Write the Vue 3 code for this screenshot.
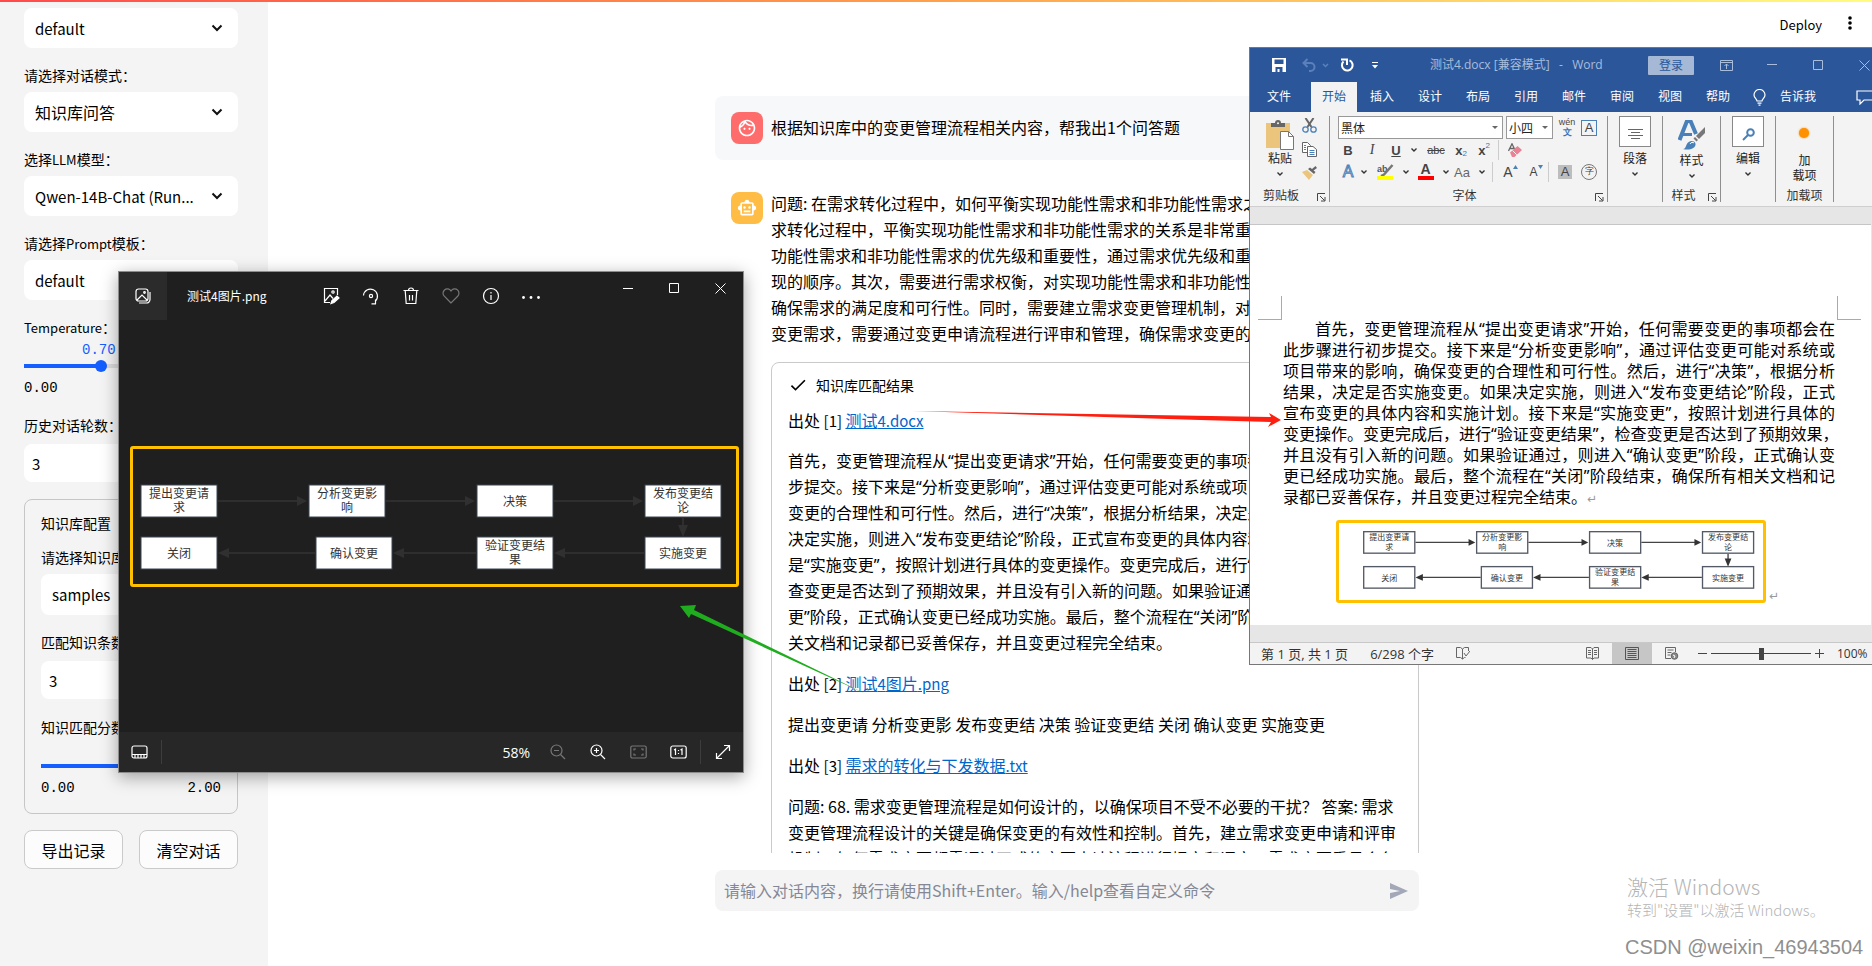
<script setup>
import { ref, h } from 'vue'

const temperature = ref(0.7)
const threshold = ref(1.2)
const rounds = ref(3)
const topK = ref(3)
const draft = ref('')
const fontSize = ref('小四')
const fontName = ref('黑体')

const fill = (value) => ({ '--fill': `${(value / 2) * 100}%` })

const answerLines = [
  '问题: 在需求转化过程中，如何平衡实现功能性需求和非功能性需求之间的关系？',
  '求转化过程中，平衡实现功能性需求和非功能性需求的关系是非常重要的。首先，',
  '功能性需求和非功能性需求的优先级和重要性，通过需求优先级和重要性确定实',
  '现的顺序。其次，需要进行需求权衡，对实现功能性需求和非功能性需求的成本，',
  '确保需求的满足度和可行性。同时，需要建立需求变更管理机制，对需求的变更',
  '变更需求，需要通过变更申请流程进行评审和管理，确保需求变更的合理性。',
]

const sourceLines = [
  '首先，变更管理流程从“提出变更请求”开始，任何需要变更的事项都会在此步骤进行初',
  '步提交。接下来是“分析变更影响”，通过评估变更可能对系统或项目带来的影响，确保',
  '变更的合理性和可行性。然后，进行“决策”，根据分析结果，决定是否实施变更。如果',
  '决定实施，则进入“发布变更结论”阶段，正式宣布变更的具体内容和实施计划。接下来',
  '是“实施变更”，按照计划进行具体的变更操作。变更完成后，进行“验证变更结果”，检',
  '查变更是否达到了预期效果，并且没有引入新的问题。如果验证通过，则进入“确认变',
  '更”阶段，正式确认变更已经成功实施。最后，整个流程在“关闭”阶段结束，确保所有相',
  '关文档和记录都已妥善保存，并且变更过程完全结束。',
]

const faqLines = [
  '问题: 68. 需求变更管理流程是如何设计的，以确保项目不受不必要的干扰？ 答案: 需求',
  '变更管理流程设计的关键是确保变更的有效性和控制。首先，建立需求变更申请和评审',
  '机制，如何需求变更都需通过正式的变更申请流程进行提交和评审，需求变更委员会负',
]

const docLines = [
  '首先，变更管理流程从“提出变更请求”开始，任何需要变更的事项都会在',
  '此步骤进行初步提交。接下来是“分析变更影响”，通过评估变更可能对系统或',
  '项目带来的影响，确保变更的合理性和可行性。然后，进行“决策”，根据分析',
  '结果，决定是否实施变更。如果决定实施，则进入“发布变更结论”阶段，正式',
  '宣布变更的具体内容和实施计划。接下来是“实施变更”，按照计划进行具体的',
  '变更操作。变更完成后，进行“验证变更结果”，检查变更是否达到了预期效果，',
  '并且没有引入新的问题。如果验证通过，则进入“确认变更”阶段，正式确认变',
  '更已经成功实施。最后，整个流程在“关闭”阶段结束，确保所有相关文档和记',
  '录都已妥善保存，并且变更过程完全结束。',
]

const nodes = [
  { x: 1, y: 1, t: ['提出变更请', '求'] },
  { x: 169, y: 1, t: ['分析变更影', '响'] },
  { x: 337, y: 1, t: ['决策'] },
  { x: 505, y: 1, t: ['发布变更结', '论'] },
  { x: 1, y: 53, t: ['关闭'] },
  { x: 176, y: 53, t: ['确认变更'] },
  { x: 337, y: 53, t: ['验证变更结', '果'] },
  { x: 505, y: 53, t: ['实施变更'] },
]
const edges = [
  { line: 'M78 17H158', head: 'M157 12l10 5-10 5z' },
  { line: 'M246 17H326', head: 'M325 12l10 5-10 5z' },
  { line: 'M414 17H494', head: 'M493 12l10 5-10 5z' },
  { line: 'M543 34V42', head: 'M538 41l5 12 5-12z' },
  { line: 'M504 69H424', head: 'M425 64l-11 5 11 5z' },
  { line: 'M336 69H263', head: 'M264 64l-11 5 11 5z' },
  { line: 'M175 69H88', head: 'M89 64l-11 5 11 5z' },
]
const textY = (n, i) => n.y + (n.t.length === 1 ? 21 : 13 + i * 14)

const tabs = ['文件', '开始', '插入', '设计', '布局', '引用', '邮件', '审阅', '视图', '帮助']

const Chevron = () =>
  h('svg', { width: 8, height: 6, viewBox: '0 0 8 6', fill: 'none', stroke: '#333', 'stroke-width': 1.4, 'aria-hidden': 'true' },
    [h('path', { d: 'M1.5 1.5L4 4l2.500-2.500' })])
const Launcher = () =>
  h('svg', { class: 'launcher', width: 9, height: 9, viewBox: '0 0 9 9', fill: 'none', stroke: '#444', 'aria-hidden': 'true' },
    [h('path', { d: 'M.5 8V.5H8M3 3l4.500 4.500M8 4v4H4' })])
</script>

<template>
  <div class="app">
    <div class="rainbow"></div>

    <aside class="sidebar">
      <div class="select">
        <select aria-label="会话"><option>default</option></select>
        <svg width="12" height="8" viewBox="0 0 12 8"><path d="M1.500 1.500L6 6l4.500-4.500" /></svg>
      </div>
      <div class="field">
        <label for="mode">请选择对话模式：</label>
        <div class="select">
          <select id="mode"><option>知识库问答</option></select>
          <svg width="12" height="8" viewBox="0 0 12 8"><path d="M1.500 1.500L6 6l4.500-4.500" /></svg>
        </div>
      </div>
      <div class="field">
        <label for="llm">选择<span class="latin">LLM</span>模型：</label>
        <div class="select">
          <select id="llm"><option>Qwen-14B-Chat (Run...</option></select>
          <svg width="12" height="8" viewBox="0 0 12 8"><path d="M1.500 1.500L6 6l4.500-4.500" /></svg>
        </div>
      </div>
      <div class="field">
        <label for="prompt">请选择<span class="latin">Prompt</span>模板：</label>
        <div class="select">
          <select id="prompt"><option>default</option></select>
          <svg width="12" height="8" viewBox="0 0 12 8"><path d="M1.500 1.500L6 6l4.500-4.500" /></svg>
        </div>
      </div>
      <div class="field">
        <label for="temp"><span class="latin">Temperature</span>：</label>
        <output class="slider-value temp-value">0.70</output>
        <input id="temp" v-model="temperature" class="slider" type="range" min="0" max="2" step="0.05" :style="fill(temperature)" />
        <div class="slider-ends"><span>0.00</span><span>2.00</span></div>
      </div>
      <div class="field">
        <label for="rounds">历史对话轮数：</label>
        <input id="rounds" v-model="rounds" class="number" type="number" />
      </div>

      <section class="kb">
        <h2>知识库配置</h2>
        <div class="field">
          <label for="kb">请选择知识库：</label>
          <div class="select">
            <select id="kb"><option>samples</option></select>
            <svg width="12" height="8" viewBox="0 0 12 8"><path d="M1.500 1.500L6 6l4.500-4.500" /></svg>
          </div>
        </div>
        <div class="field">
          <label for="topk">匹配知识条数：</label>
          <input id="topk" v-model="topK" class="number" type="number" />
        </div>
        <div class="field">
          <label for="score">知识匹配分数阈值：</label>
          <output class="slider-value score-value">1.20</output>
          <input id="score" v-model="threshold" class="slider" type="range" min="0" max="2" step="0.01" :style="fill(threshold)" />
          <div class="slider-ends"><span>0.00</span><span>2.00</span></div>
        </div>
      </section>

      <div class="actions">
        <button type="button">导出记录</button>
        <button type="button">清空对话</button>
      </div>
    </aside>

    <main class="main">
      <header class="topbar">
        <button type="button">Deploy</button>
        <button type="button" aria-label="菜单">
          <svg width="4" height="14" viewBox="0 0 4 14"><circle cx="2" cy="2" r="1.800" /><circle cx="2" cy="7" r="1.800" /><circle cx="2" cy="12" r="1.800" /></svg>
        </button>
      </header>

      <div class="thread">
        <article class="message user">
          <div class="avatar red">
            <svg width="20" height="20" viewBox="0 0 24 24" fill="#fff"><path d="M10.250 13c0 .69-.56 1.250-1.250 1.250S7.750 13.690 7.750 13s.56-1.250 1.250-1.250 1.250.56 1.250 1.250zM15 11.750c-.69 0-1.250.56-1.250 1.250s.56 1.250 1.250 1.250 1.250-.56 1.250-1.250-.56-1.250-1.250-1.250zm7 .25c0 5.520-4.480 10-10 10S2 17.520 2 12 6.480 2 12 2s10 4.480 10 10zM10.660 4.120C12.060 6.440 14.600 8 17.500 8c.46 0 .91-.05 1.340-.12C17.440 5.560 14.900 4 12 4c-.46 0-.91.05-1.340.12zM4.420 9.470c1.710-.97 3.030-2.550 3.660-4.440-1.710.97-3.030 2.550-3.660 4.440zM20 12c0-.78-.12-1.530-.33-2.240-.7.15-1.420.24-2.170.24-3.130 0-5.920-1.440-7.760-3.690C8.690 8.870 6.600 10.880 4 11.860c.01.040 0 .09 0 .14 0 4.410 3.590 8 8 8s8-3.590 8-8z" /></svg>
          </div>
          <p>根据知识库中的变更管理流程相关内容，帮我出1个问答题</p>
        </article>

        <article class="message">
          <div class="avatar amber">
            <svg width="20" height="20" viewBox="0 0 24 24" fill="#fff"><path d="M20 9V7c0-1.100-.9-2-2-2h-3c0-1.660-1.340-3-3-3S9 3.340 9 5H6c-1.100 0-2 .9-2 2v2c-1.660 0-3 1.340-3 3s1.340 3 3 3v4c0 1.100.9 2 2 2h12c1.100 0 2-.9 2-2v-4c1.660 0 3-1.340 3-3s-1.340-3-3-3zm-2 10H6V7h12v12zm-9-6c-.83 0-1.500-.67-1.500-1.500S8.170 10 9 10s1.500.67 1.500 1.500S9.830 13 9 13zm7.500-1.500c0 .83-.67 1.500-1.500 1.500s-1.500-.67-1.500-1.500.67-1.500 1.500-1.500 1.500.67 1.500 1.500zM8 15h8v2H8v-2z" /></svg>
          </div>
          <div class="answer">
            <p><span v-for="l in answerLines" :key="l" class="line">{{ l }}</span></p>
            <details open class="sources">
              <summary>
                <svg width="20" height="20" viewBox="0 0 24 24"><path d="M9 16.170L4.830 12l-1.420 1.410L9 19 21 7l-1.410-1.410L9 16.170z" /></svg>
                知识库匹配结果
              </summary>
              <p>出处 <span class="latin">[1] </span><a href="#doc">测试<span class="latin">4.docx</span></a></p>
              <p class="quoted"><span v-for="l in sourceLines" :key="l" class="line">{{ l }}</span></p>
              <p>出处 <span class="latin">[2] </span><a href="#image">测试<span class="latin">4</span>图片<span class="latin">.png</span></a></p>
              <p>提出变更请 分析变更影 发布变更结 决策 验证变更结 关闭 确认变更 实施变更</p>
              <p>出处 <span class="latin">[3] </span><a href="#text">需求的转化与下发数据<span class="latin">.txt</span></a></p>
              <p><span v-for="l in faqLines" :key="l" class="line">{{ l }}</span></p>
            </details>
          </div>
        </article>
      </div>

      <footer class="composer">
        <form @submit.prevent>
          <input v-model="draft" type="text" aria-label="对话内容" placeholder="请输入对话内容，换行请使用Shift+Enter。输入/help查看自定义命令" />
          <button type="submit" aria-label="发送">
            <svg width="20" height="20" viewBox="0 0 20 20"><path d="M1 2v6L11 10 1 12v6L19 10z" /></svg>
          </button>
        </form>
      </footer>
    </main>

    <div class="watermark">
      <div class="wm-big">激活 Windows</div>
      <div class="wm-small">转到"设置"以激活 Windows。</div>
      <div class="wm-csdn">CSDN @weixin_46943504</div>
    </div>

    <section class="viewer">
      <header class="v-head">
        <button type="button" class="v-home" aria-label="所有照片">
          <svg width="16" height="16" viewBox="0 0 16 16"><rect x="1" y="1" width="12" height="12" rx="2.500" /><path d="M2 12l5-5 5 5M15 4v7.500a3.500 3.500 0 0 1-3.500 3.500H4" /><circle cx="9.500" cy="4.500" r=".8" /></svg>
        </button>
        <h2>测试4图片.png</h2>
        <button type="button" aria-label="编辑"><svg width="18" height="18" viewBox="0 0 18 18"><path d="M15.500 8V1.500h-13v14H8M3 14l5-6 3 3.500" /><circle cx="11" cy="5" r="1.200" /><path d="M9 16.500l1-3 5-4.500 2 2-5 4.500z" fill="#fff" /></svg></button>
        <button type="button" aria-label="旋转"><svg width="18" height="18" viewBox="0 0 18 18"><path d="M1.500 8.500a7 7 0 1 1 12 5.500v3M9.500 16.800h4.500M13.500 17v-4.500" /><circle cx="9" cy="9" r="1.600" /></svg></button>
        <button type="button" aria-label="删除"><svg width="18" height="18" viewBox="0 0 18 18"><path d="M1.500 3.500h15M6.500 3.500a2.500 2.500 0 0 1 5 0M3.200 3.500l1 13h9.600l1-13M7.500 8v5.500M10.500 8v5.500" /></svg></button>
        <button type="button" class="dim" aria-label="收藏"><svg width="18" height="18" viewBox="0 0 18 18"><path d="M9 16L2.300 9.200a4.200 4.200 0 0 1 0-6 4.200 4.200 0 0 1 6 0l.7.8.7-.8a4.200 4.200 0 0 1 6 0 4.200 4.200 0 0 1 0 6z" /></svg></button>
        <button type="button" aria-label="信息"><svg width="18" height="18" viewBox="0 0 18 18"><circle cx="9" cy="9" r="7.500" /><path d="M9 8v5M9 5v1.400" /></svg></button>
        <button type="button" aria-label="更多"><svg width="20" height="18" viewBox="0 0 20 18"><g fill="#fff" stroke="none"><circle cx="2.500" cy="10.500" r="1.400" /><circle cx="10" cy="10.500" r="1.400" /><circle cx="17.500" cy="10.500" r="1.400" /></g></svg></button>
        <div class="v-controls">
          <button type="button" aria-label="最小化"><svg width="10" height="10" viewBox="0 0 10 10"><path d="M0 5.500h10" /></svg></button>
          <button type="button" aria-label="最大化"><svg width="10" height="10" viewBox="0 0 10 10"><path d="M.5.5h9v9h-9z" /></svg></button>
          <button type="button" aria-label="关闭"><svg width="11" height="11" viewBox="0 0 11 11"><path d="M.5.5l10 10M10.500.5l-10 10" /></svg></button>
        </div>
      </header>
      <div class="v-stage">
        <div class="highlight">
          <svg class="flow" viewBox="0 0 586 86">
            <g v-for="e in edges" :key="e.line"><path class="edge" :d="e.line" /><path class="tip" :d="e.head" /></g>
            <g v-for="n in nodes" :key="n.t[0]">
              <rect :x="n.x" :y="n.y" width="76" height="32" />
              <text v-for="(s, i) in n.t" :key="s" :x="n.x + 38" :y="textY(n, i)">{{ s }}</text>
            </g>
          </svg>
        </div>
      </div>
      <footer class="v-foot">
        <button type="button" aria-label="胶片"><svg width="17" height="14" viewBox="0 0 17 14"><rect x="1" y="1" width="15" height="12" rx="2" /><path d="M1 9.500h15M4 10v3M7 10v3M10 10v3M13 10v3" /></svg></button>
        <i class="v-sep"></i>
        <span class="zoom">58%</span>
        <button type="button" class="dim" aria-label="缩小"><svg width="16" height="16" viewBox="0 0 16 16"><circle cx="6.500" cy="6.500" r="5.500" /><path d="M10.500 10.500L15 15M4 6.500h5" /></svg></button>
        <button type="button" aria-label="放大"><svg width="16" height="16" viewBox="0 0 16 16"><circle cx="6.500" cy="6.500" r="5.500" /><path d="M10.500 10.500L15 15M4 6.500h5M6.500 4v5" /></svg></button>
        <button type="button" class="dim" aria-label="适应窗口"><svg width="17" height="14" viewBox="0 0 17 14"><rect x=".8" y="1" width="15.400" height="12" rx="1.500" /><path d="M4 5.500V4h2M11 4h2v1.500M13 8.500V10h-2M6 10H4V8.500" /></svg></button>
        <button type="button" aria-label="实际大小"><svg width="17" height="14" viewBox="0 0 17 14"><rect x=".8" y="1" width="15.400" height="12" rx="2" /><path d="M4 5l1.500-1v6M10.500 5L12 4v6M8.500 5v1M8.500 8v1" /></svg></button>
        <i class="v-sep"></i>
        <button type="button" aria-label="全屏"><svg width="16" height="16" viewBox="0 0 16 16"><path d="M1.500 14.500l13-13M9 1.500h5.500V7M1.500 9v5.500H7" /></svg></button>
      </footer>
    </section>

    <section class="word">
      <header class="w-title">
        <div class="w-quick">
          <button type="button" aria-label="保存"><svg width="14" height="14" viewBox="0 0 14 14"><path fill="#fff" d="M0 0h14v14H0zM2.500 1.500v4.500h9V1.500zM3.500 9v5h2v-3h2v3h3V9z" fill-rule="evenodd" /></svg></button>
          <button type="button" aria-label="撤销"><svg width="14" height="14" viewBox="0 0 14 14" fill="none" stroke="#5b80bb" stroke-width="2"><path d="M5.500 1L1.500 5l4 4M2 5h6.500a4 4 0 0 1 0 8H7" /></svg></button>
          <svg width="7" height="5" viewBox="0 0 7 5" fill="none" stroke="#5b80bb" stroke-width="1.500"><path d="M1 1l2.500 2.500L6 1" /></svg>
          <button type="button" aria-label="重做"><svg width="14" height="14" viewBox="0 0 14 14" fill="none" stroke="#fff" stroke-width="2"><path d="M9.500 2.400A5.300 5.300 0 1 1 3.500 3.500M1 1.500h6V7" /></svg></button>
          <button type="button" aria-label="自定义"><svg width="6" height="7" viewBox="0 0 6 7"><path d="M0 .5h6" stroke="#fff" /><path d="M0 3h6L3 6.500z" fill="#fff" /></svg></button>
        </div>
        <h2>测试4.docx [兼容模式] &nbsp; - &nbsp; Word</h2>
        <button type="button" class="login">登录</button>
        <div class="w-controls">
          <button type="button" aria-label="功能区选项"><svg width="13" height="11" viewBox="0 0 13 11"><path d="M.5.5h12v10H.5zM.5 2.500h12M6.500 9V4M4.500 6l2-2 2 2" /></svg></button>
          <button type="button" aria-label="最小化"><svg width="10" height="10" viewBox="0 0 10 10"><path d="M0 4.500h10" /></svg></button>
          <button type="button" aria-label="最大化"><svg width="10" height="10" viewBox="0 0 10 10"><path d="M.5.5h9v9h-9z" /></svg></button>
          <button type="button" aria-label="关闭"><svg width="11" height="11" viewBox="0 0 11 11"><path d="M.5.5l10 10M10.500.5l-10 10" /></svg></button>
        </div>
      </header>
      <nav class="w-tabs">
        <button v-for="t in tabs" :key="t" type="button" :class="{ active: t === '开始' }">{{ t }}</button>
        <svg class="bulb" width="13" height="17" viewBox="0 0 13 17" fill="none" stroke="#fff" stroke-width="1.200"><path d="M4 12c0-2-3-3-3-6a5.500 5.500 0 0 1 11 0c0 3-3 4-3 6zM4.500 14.200h4M5.500 16.200h2" /></svg>
        <button type="button" class="tell">告诉我</button>
        <svg class="comment" width="18" height="15" viewBox="0 0 18 15" fill="none" stroke="#fff" stroke-width="1.200"><path d="M18 1H1v9h3v4l4-4h10" /></svg>
      </nav>

      <div class="ribbon">
        <div class="group clip">
          <div class="clip-row">
            <button type="button" class="big">
              <svg width="28" height="30" viewBox="0 0 28 30"><rect x="0" y="3" width="24" height="25" fill="#ecc57c" /><path d="M5 7V3h4a3 3 0 0 1 6 0h4v4z" fill="#666" /><circle cx="12" cy="3.300" r="1" fill="#f3f3f3" /><path d="M14.500 11.500h8l5 5v13h-13z" fill="#fff" stroke="#777" /><path d="M22.500 11.500v5h5" fill="none" stroke="#777" /></svg>
              <span>粘贴</span><Chevron />
            </button>
            <div class="clip-tools">
              <button type="button" aria-label="剪切"><svg width="15" height="15" viewBox="0 0 15 15" fill="none"><path d="M3.500 0l6 9M11.500 0l-6 9" stroke="#666" stroke-width="2" /><circle cx="3.500" cy="11.500" r="2.700" stroke="#4a80b8" stroke-width="1.300" /><circle cx="11.500" cy="11.500" r="2.700" stroke="#4a80b8" stroke-width="1.300" /></svg></button>
              <button type="button" aria-label="复制"><svg width="15" height="15" viewBox="0 0 15 15" fill="#fff" stroke="#666"><path d="M.5.5h5l3 3v7h-8z" /><path d="M5.500 4.500h5.500l3.500 3v7h-9z" /><path d="M2 3.500h2M2 5.500h2M2 7.500h2M7.500 8.500h5M7.500 10.500h5M7.500 12.500h5" stroke="#4a80b8" /></svg></button>
              <button type="button" aria-label="格式刷"><svg width="15" height="14" viewBox="0 0 15 14"><path d="M0 6l5-2 6 5-4 5z" fill="#ecc57c" /><path d="M6 3l6 5 1.500-2-2-1.600L15 2 13.500 0 10 3 8 1.500z" fill="#666" /></svg></button>
            </div>
          </div>
          <div class="g-label">剪贴板</div><Launcher />
        </div>

        <div class="group font">
          <div class="f-row combos">
            <label class="combo wide"><select v-model="fontName" aria-label="字体"><option>黑体</option></select><i></i></label>
            <label class="combo"><select v-model="fontSize" aria-label="字号"><option>小四</option></select><i></i></label>
            <button type="button" class="pinyin"><small>wén</small><b>文</b></button>
            <button type="button" class="boxed">A</button>
          </div>
          <div class="f-row">
            <button type="button" class="w20"><b>B</b></button>
            <button type="button" class="w28 serif"><i>I</i></button>
            <button type="button" class="w20"><u><b>U</b></u></button>
            <span class="w16"><Chevron /></span>
            <button type="button" class="w28 strike">abc</button>
            <button type="button" class="w22"><b>x</b><sub>2</sub></button>
            <button type="button" class="w24"><b>x</b><sup>2</sup></button>
            <span class="sep"></span>
            <button type="button" class="w28" aria-label="清除格式"><svg width="14" height="15" viewBox="0 0 14 15"><path d="M.5 8L4 .8 7 7M1.800 5.500h4" fill="none" stroke="#666" stroke-width="1.300" /><path d="M2 9.500L9.500 3 14 7l-7.500 7H4z" fill="#ea8296" /><path d="M4.500 7.500l4.300 4.300" stroke="#f3f3f3" /></svg></button>
          </div>
          <div class="f-row">
            <button type="button" class="w20 glow">A</button>
            <span class="w12"><Chevron /></span>
            <button type="button" class="w30" aria-label="突出显示"><svg width="17" height="16" viewBox="0 0 17 16"><text x="0" y="8" font-size="9" font-weight="700" fill="#555" font-family="Liberation Sans">ab</text><path d="M15.500 1L7 10.500l-3 1.500" fill="none" stroke="#777" stroke-width="2.500" /><path d="M0 12h16v4H0z" fill="#ff0" /></svg></button>
            <span class="w10"><Chevron /></span>
            <button type="button" class="w30 redbar">A</button>
            <span class="w10"><Chevron /></span>
            <button type="button" class="w24 gray">Aa</button>
            <span class="w16"><Chevron /></span>
            <span class="sep"></span>
            <button type="button" class="w30 grow">A<svg width="5" height="4" viewBox="0 0 5 4"><path d="M0 4h5L2.500 0z" fill="#4a80b8" /></svg></button>
            <button type="button" class="w20 shrink">A<svg width="5" height="4" viewBox="0 0 5 4"><path d="M0 0h5L2.500 4z" fill="#4a80b8" /></svg></button>
            <span class="sep"></span>
            <button type="button" class="w28"><span class="shade">A</span></button>
            <button type="button" class="w20"><span class="ring">字</span></button>
          </div>
          <div class="g-label">字体</div><Launcher />
        </div>

        <div class="group para">
          <button type="button" class="big">
            <span class="tile"><svg width="15" height="12" viewBox="0 0 15 12" stroke="#666"><path d="M0 1.500h15M3 4.500h9M0 7.500h15M3 10.500h9" /></svg></span>
            <span>段落</span><Chevron />
          </button>
        </div>
        <div class="group style">
          <button type="button" class="big">
            <svg class="style-ico" width="28" height="30" viewBox="0 0 28 30"><path d="M1.500 20L9 1h3.500L18 14" fill="none" stroke="#4a80b8" stroke-width="4" /><path d="M4 14.500h10" stroke="#4a80b8" stroke-width="3" /><path d="M27 7v6l-6 6-3-3z" fill="#777" /><path d="M17 17l3 3-1.500 1.500-3-3z" fill="#777" /><path d="M5 29c4 0 2-7 8-8 4-.5 6 3 3.500 6-3 3-8 3-11.500 2z" fill="#4a80b8" /><path d="M12 24c1-2 3-2 4-1" stroke="#fff" fill="none" /></svg>
            <span>样式</span><Chevron />
          </button>
          <div class="g-label">样式</div><Launcher />
        </div>
        <div class="group edit">
          <button type="button" class="big">
            <span class="tile"><svg width="13" height="13" viewBox="0 0 13 13" fill="none" stroke="#4a80b8" stroke-width="2"><circle cx="8.500" cy="4.500" r="3.300" /><path d="M6 7l-5 5" /></svg></span>
            <span>编辑</span><Chevron />
          </button>
        </div>
        <div class="group addin">
          <button type="button" class="big"><i class="dot"></i><span class="two">加<br />载项</span></button>
          <div class="g-label">加载项</div>
        </div>
      </div>

      <div class="w-canvas">
        <div class="paper">
          <div class="marks"><i></i><i></i></div>
          <div class="doc">
            <div v-for="l in docLines" :key="l" class="doc-line">{{ l }}</div>
          </div>
          <div class="doc-fig">
            <div class="highlight">
              <svg class="flow" viewBox="0 0 586 86">
                <g v-for="e in edges" :key="e.line"><path class="edge" :d="e.line" /><path class="tip" :d="e.head" /></g>
                <g v-for="n in nodes" :key="n.t[0]">
                  <rect :x="n.x" :y="n.y" width="76" height="32" />
                  <text v-for="(s, i) in n.t" :key="s" :x="n.x + 38" :y="textY(n, i)">{{ s }}</text>
                </g>
              </svg>
            </div>
            <span class="ret">↵</span>
          </div>
        </div>
      </div>

      <footer class="w-status">
        <span>第 1 页, 共 1 页</span>
        <span>6/298 个字</span>
        <svg width="14" height="13" viewBox="0 0 14 13" fill="none" stroke="#666"><path d="M6.500 12V2L4.500.5h-4v10h4zm0 0l2-1.500h1M6.500 2l2-1.500h4V4M8 6l2 3 4-5" /></svg>
        <div class="w-views">
          <button type="button" aria-label="阅读视图"><svg width="13" height="13" viewBox="0 0 13 13" fill="none" stroke="#666"><path d="M6.500 2v10.500M6.500 2L5 .5H.5v10.500H5l1.500 1.500L8 11h4.500V.5H8zM2 3.500h3M2 5.500h3M2 7.500h3M8 3.500h3M8 5.500h3M8 7.500h3" /></svg></button>
          <button type="button" class="on" aria-label="页面视图"><svg width="14" height="13" viewBox="0 0 14 13" fill="none" stroke="#555"><path d="M.5.5h13v12H.5zM2.500 2.500h9M2.500 4.500h9M2.500 6.500h9M2.500 8.500h9M2.500 10.500h9" /></svg></button>
          <button type="button" aria-label="Web 视图"><svg width="14" height="13" viewBox="0 0 14 13" fill="none" stroke="#666"><path d="M6 11.500H.5V.5h10V5M2.500 3h6M2.500 5.500h4M2.500 8h3" /><circle cx="9.500" cy="9" r="3.300" fill="#888" /><path d="M8 8l2 1-1 2" stroke="#fff" /></svg></button>
        </div>
        <button type="button" class="step" aria-label="缩小"><svg width="9" height="9" viewBox="0 0 9 9"><path d="M0 4.500h9" stroke="#444" /></svg></button>
        <input class="w-zoom" type="range" aria-label="缩放" value="50" />
        <button type="button" class="step" aria-label="放大"><svg width="9" height="9" viewBox="0 0 9 9"><path d="M0 4.500h9M4.500 0v9" stroke="#444" /></svg></button>
        <span class="pct">100%</span>
      </footer>
    </section>

    <svg class="annotations" width="1872" height="966" viewBox="0 0 1872 966" aria-hidden="true">
      <path d="M912 411L1271 417 1269 413 1281 420 1268 427 1271 422 1200 420z" fill="#ff1f10" />
      <path d="M866 694L694 610 696 605 680 606 689 618 691 614z" fill="#1fac1f" />
    </svg>
  </div>
</template>

<style>
html,
body {
  margin: 0;
  height: 100%;
  overflow: hidden;
}
#app {
  height: 100%;
}
</style>

<style scoped>
* {
  box-sizing: border-box;
}
.app {
  position: relative;
  display: flex;
  height: 100vh;
  overflow: hidden;
  background: #fff;
  color: #000;
  font-family: "Noto Sans CJK SC", sans-serif;
  font-size: 16px;
}
button,
input,
select {
  font: inherit;
  color: inherit;
  margin: 0;
}
button {
  padding: 0;
  border: 0;
  background: none;
}
p,
h2 {
  margin: 0;
  font-weight: 400;
}
.rainbow {
  position: absolute;
  inset: 0 0 auto 0;
  height: 2px;
  background: linear-gradient(90deg, #ff4b4b, #ffa04b 50%, #fffd80);
  z-index: 1;
}

/* sidebar */
.sidebar {
  flex: none;
  display: flex;
  flex-direction: column;
  gap: 16px;
  width: 268px;
  padding: 8px 30px 0 24px;
  background: #f4f4f4;
}
.field {
  display: flex;
  flex-direction: column;
}
.field label,
.kb h2 {
  height: 24px;
  font-size: 14px;
  line-height: 23px;
  white-space: nowrap;
}
.field .latin {
  font-size: 13px;
  line-height: 1;
}
.field .select {
  margin-top: 4px;
}
.select {
  position: relative;
}
.select select {
  width: 100%;
  height: 40px;
  padding: 0 40px 0 11px;
  border: 0;
  border-radius: 8px;
  background: #fff;
  appearance: none;
  font-size: 15px;
}
.select #mode {
  font-size: 16px;
}
.kb .select {
  height: 41px;
}
.kb .select select {
  height: 41px;
}
.select svg {
  position: absolute;
  right: 15px;
  top: 16px;
  fill: none;
  stroke: #111;
  stroke-width: 2;
}
.number {
  width: 100%;
  height: 38px;
  margin: 6px 0 1px;
  padding: 0 8px;
  border: 0;
  border-radius: 8px;
  background: #fff;
  font-size: 15px;
  appearance: textfield;
}
.number::-webkit-inner-spin-button {
  appearance: none;
}
.slider-value,
.slider-ends {
  font-family: "Liberation Mono", monospace;
  font-size: 14px;
  line-height: 20px;
}
.slider-value {
  color: #155eff;
}
.temp-value {
  padding-left: 58px;
}
.score-value {
  padding-left: 96px;
}
.slider {
  width: 100%;
  height: 12px;
  appearance: none;
  background: linear-gradient(90deg, #155eff var(--fill), #dcdcdc var(--fill)) center / 100% 4px no-repeat;
  border-radius: 2px;
}
.slider::-webkit-slider-thumb {
  appearance: none;
  width: 12px;
  height: 12px;
  border-radius: 50%;
  background: #155eff;
}
.slider-ends {
  display: flex;
  justify-content: space-between;
  margin-top: 6px;
}
.kb {
  display: flex;
  flex-direction: column;
  gap: 16px;
  padding: 12px 16px 15px;
  border: 1px solid #c6c6c6;
  border-radius: 8px;
}
.kb h2 {
  margin-bottom: -6px;
}
.actions {
  display: flex;
  gap: 16px;
}
.actions button {
  flex: 1;
  height: 39px;
  border: 1px solid #cacaca;
  border-radius: 8px;
  background: #fcfcfc;
}

/* chat */
.main {
  flex: 1;
  display: flex;
  flex-direction: column;
  min-width: 0;
  padding-right: 6px;
}
.topbar {
  display: flex;
  justify-content: flex-end;
  align-items: center;
  gap: 26px;
  height: 48px;
  padding-right: 14px;
  font-size: 13px;
}
.thread,
.composer {
  width: 704px;
  margin: 0 auto;
}
.thread {
  flex: 1;
  min-height: 0;
  overflow: hidden;
  padding-top: 48px;
}
.message {
  display: flex;
  gap: 8px;
  padding: 14px 0 16px 16px;
}
.message.user {
  padding: 16px;
  margin-bottom: 16px;
  border-radius: 8px;
  background: #f7f8fa;
}
.user p {
  line-height: 30px;
}
.avatar {
  flex: none;
  display: flex;
  align-items: center;
  justify-content: center;
  width: 32px;
  height: 32px;
  border-radius: 8px;
}
.red {
  background: #ff6c6c;
}
.amber {
  margin-top: 2px;
  background: #ffbd45;
}
.answer {
  flex: 1;
  min-width: 0;
  line-height: 26px;
}
.answer .latin {
  font-size: 15px;
  line-height: 1;
}
.line {
  display: block;
  white-space: nowrap;
}
.sources {
  margin-top: 16px;
  padding: 10px 16px;
  border: 1px solid #cacaca;
  border-radius: 8px;
}
.sources summary {
  display: flex;
  align-items: center;
  gap: 8px;
  height: 24px;
  margin-bottom: 10px;
  font-size: 14px;
  list-style: none;
}
.sources p {
  margin-bottom: 15px;
  white-space: nowrap;
}
.sources .quoted {
  margin-bottom: 14px;
  font-family: "Noto Sans", "Noto Sans CJK SC", sans-serif;
}
a {
  color: #0066cc;
  text-decoration: underline;
}
.composer {
  padding: 17px 0 55px;
}
.composer form {
  display: flex;
  align-items: center;
  height: 41px;
  padding: 0 10px 0 9px;
  border-radius: 8px;
  background: #f4f4f4;
}
.composer input {
  flex: 1;
  border: 0;
  background: none;
  padding: 0 0 2px;
}
.composer input::placeholder {
  color: #858894;
  opacity: 1;
}
.composer svg {
  display: block;
  fill: #a3a8b8;
}

.watermark {
  position: absolute;
  left: 1625px;
  bottom: 5px;
  color: #b5b5b5;
  white-space: nowrap;
}
.wm-big {
  padding-left: 2px;
  font-size: 21px;
  line-height: 26px;
  font-weight: 300;
}
.wm-small {
  padding-left: 2px;
  font-size: 15px;
  line-height: 22px;
  font-weight: 300;
}
.wm-csdn {
  margin-top: 12px;
  font-family: "Liberation Sans", sans-serif;
  font-size: 20px;
  line-height: 28px;
  color: #8f8f8f;
}

/* shared flow chart */
.highlight {
  border: 3px solid #ffc000;
  border-radius: 3px;
}
.flow {
  display: block;
}
.flow rect {
  fill: #fff;
  stroke: #555b66;
  stroke-width: 2;
}
.flow text {
  font-size: 12px;
  text-anchor: middle;
  fill: #333;
  stroke: none;
}
.edge {
  fill: none;
  stroke: #444;
  stroke-width: 2;
}
.tip {
  fill: #333;
}

/* photo viewer */
.viewer {
  position: absolute;
  left: 118px;
  top: 271px;
  display: flex;
  flex-direction: column;
  width: 626px;
  height: 502px;
  border: 1px solid #8c8c8c;
  background: #1f1f1f;
  color: #fff;
  box-shadow: 0 4px 16px rgba(0, 0, 0, 0.35);
}
.viewer svg {
  fill: none;
  stroke: #fff;
  stroke-width: 1.2;
}
.viewer button {
  display: flex;
  align-items: center;
  justify-content: center;
  width: 40px;
}
.viewer .dim svg {
  stroke: #777;
}
.v-head {
  display: flex;
  height: 48px;
}
.viewer .v-home {
  width: 48px;
  background: #2b2b2b;
}
.v-head h2 {
  width: 124px;
  margin: 0 0 0 20px;
  font-size: 12px;
  line-height: 48px;
}
.v-controls {
  display: flex;
  height: 32px;
  margin-left: auto;
}
.viewer .v-controls button {
  width: 46px;
}
.viewer .v-controls svg {
  stroke-width: 1;
}
.v-stage {
  flex: 1;
  padding: 126px 4px 0 11px;
}
.v-stage .highlight {
  height: 141px;
  padding: 35px 11px 0 7px;
}
.v-stage .flow {
  width: 586px;
  stroke: none;
}
.v-stage .flow rect {
  stroke: #3c4552;
  stroke-width: 1;
}
.v-stage .flow .tip {
  fill: #303030;
}
.v-stage .flow .edge {
  stroke: #2e2e2e;
}
.v-foot {
  display: flex;
  align-items: center;
  height: 40px;
  background: #272727;
}
.v-foot button {
  height: 40px;
}
.v-sep {
  width: 1px;
  height: 24px;
  margin: 0 2px;
  background: #3d3d3d;
}
.zoom {
  margin: 0 8px 0 auto;
  font-family: "Open Sans", sans-serif;
  font-size: 14px;
}

/* word window */
.word {
  position: absolute;
  left: 1249px;
  right: 0;
  top: 47px;
  height: 618px;
  display: flex;
  flex-direction: column;
  overflow: hidden;
  border: solid #777;
  border-width: 1px 0 1px 1px;
  background: #f3f3f3;
  font-size: 12px;
  white-space: nowrap;
}
.w-title {
  display: flex;
  align-items: center;
  flex: none;
  height: 34px;
  background: #2b579a;
  color: #a9bcdc;
}
.w-quick {
  display: flex;
  align-items: center;
  width: 180px;
  padding-left: 22px;
}
.w-quick button,
.w-quick > svg {
  flex: none;
  margin-right: 16px;
}
.w-quick button:nth-of-type(2) {
  margin-right: 6px;
}
.w-quick > svg {
  margin-right: 11px;
}
.w-quick button:nth-of-type(3) {
  margin-right: 18px;
}
.w-title svg {
  display: block;
}
.w-title h2 {
  width: 218px;
  font-size: 12px;
  line-height: 32px;
  font-family: "Open Sans", "Noto Sans CJK SC", sans-serif;
}
.login {
  width: 46px;
  height: 19px;
  border-radius: 1px;
  background: #a5b8d6;
  color: #2b579a;
  line-height: 18px;
}
.w-controls {
  display: flex;
  flex: none;
  margin-left: 9px;
  margin-right: -22px;
}
.w-controls button {
  display: flex;
  justify-content: center;
  align-items: center;
  width: 46px;
}
.w-controls svg {
  fill: none;
  stroke: #a9bcdc;
}
.w-tabs {
  display: flex;
  flex: none;
  align-items: center;
  height: 30px;
  padding-left: 5px;
  background: #2b579a;
  color: #fff;
}
.w-tabs button {
  flex: none;
  width: 48px;
  height: 30px;
  padding-bottom: 4px;
}
.w-tabs button:first-child {
  margin-right: 8px;
}
.w-tabs .active {
  width: 46px;
  margin-right: 1px;
  background: #f3f3f3;
  color: #2b579a;
}
.w-tabs .bulb {
  flex: none;
  margin: 0 13px 0 11px;
}
.w-tabs .tell {
  width: 38px;
}
.w-tabs .comment {
  flex: none;
  margin-left: auto;
  margin-right: -2px;
}
.ribbon {
  display: flex;
  flex: none;
  height: 95px;
  padding-top: 4px;
  border-bottom: 1px solid #cfcfcf;
  color: #333;
}
.group {
  position: relative;
  flex: none;
  height: 86px;
  border-right: 1px solid #8f8f8f;
}
.group button {
  color: #444;
}
.group .big {
  color: #222;
}
.g-label {
  position: absolute;
  left: 0;
  right: 8px;
  bottom: -1px;
  line-height: 16px;
  text-align: center;
}
.launcher {
  position: absolute;
  right: 3px;
  bottom: 0;
}
.clip {
  width: 80px;
}
.clip .g-label {
  right: 17px;
}
.clip-row {
  display: flex;
  align-items: flex-start;
  padding: 4px 0 0 16px;
}
.big {
  display: flex;
  flex-direction: column;
  align-items: center;
  line-height: 16px;
}
.big svg:last-child {
  margin-top: 5px;
}
.clip-tools {
  display: flex;
  flex-direction: column;
  gap: 9px;
  margin: -2px 0 0 8px;
}
.clip-tools svg {
  display: block;
}
.font {
  width: 278px;
  padding-left: 8px;
}
.f-row {
  display: flex;
  align-items: center;
  height: 22px;
}
.f-row > button,
.f-row > span {
  flex: none;
  display: flex;
  align-items: center;
  justify-content: center;
  height: 22px;
  font-family: "Liberation Sans", sans-serif;
  font-size: 13px;
}
.f-row.combos {
  height: 23px;
  gap: 3px;
}
.combo {
  position: relative;
  width: 47px;
  height: 23px;
}
.combo.wide {
  width: 165px;
}
.combo select {
  width: 100%;
  height: 23px;
  padding: 0 2px;
  border: 1px solid #999;
  background: #fff;
  appearance: none;
  color: #222;
}
.combo i {
  position: absolute;
  right: 5px;
  top: 10px;
  border: 3px solid transparent;
  border-top-color: #666;
  border-bottom: 0;
}
.f-row > .pinyin {
  flex-direction: column;
  width: 18px;
  margin-left: 2px;
  color: #444;
}
.pinyin small {
  font-size: 9px;
  line-height: 9px;
}
.pinyin b {
  font-size: 9px;
  line-height: 11px;
  color: #3b77b8;
}
.f-row > .boxed {
  width: 16px;
  height: 16px;
  margin-left: 2px;
  border: 1px solid #4a80b8;
}
.f-row .w10 { width: 9px; }
.f-row .w12 { width: 12px; }
.f-row .w16 { width: 16px; }
.f-row .w20 { width: 20px; }
.f-row .w22 { width: 22px; }
.f-row .w24 { width: 24px; }
.f-row .w28 { width: 28px; }
.f-row .w30 { width: 31px; }
.f-row .sep {
  width: 1px;
  height: 20px;
  margin: 0 2px;
  background: #ccc;
}
.f-row > .serif {
  font-family: "Liberation Serif", serif;
  font-size: 14px;
}
.f-row > .strike {
  font-size: 11px;
  text-decoration: line-through;
}
.f-row sub,
.f-row sup {
  font-size: 8px;
  line-height: 8px;
  color: #3b77b8;
}
.f-row sub {
  align-self: flex-end;
  margin-bottom: 3px;
}
.f-row sup {
  align-self: flex-start;
  margin-top: 3px;
}
.f-row > .glow {
  font-size: 16px;
  color: #fff;
  -webkit-text-stroke: 1px #4a80b8;
}
.f-row > .redbar {
  font-size: 14px;
  font-weight: 700;
  background: linear-gradient(#f00, #f00) center bottom 3px / 16px 4px no-repeat;
  align-items: flex-start;
}
.f-row > .gray {
  color: #666;
}
.f-row > .grow {
  font-size: 14px;
}
.f-row > .shrink {
  font-size: 12px;
}
.grow svg,
.shrink svg {
  align-self: flex-start;
  margin-top: 4px;
}
.shade {
  width: 14px;
  line-height: 14px;
  background: #bdbdbd;
}
.ring {
  width: 16px;
  height: 16px;
  border: 1px solid #777;
  border-radius: 50%;
  font-size: 9px;
  line-height: 13px;
}
.para,
.edit {
  width: 55px;
}
.para .big,
.edit .big {
  margin: 0 auto;
}
.tile {
  display: flex;
  align-items: center;
  justify-content: center;
  width: 32px;
  height: 31px;
  margin-bottom: 3px;
  border: 1px solid #888;
  background: #fff;
}
.style {
  width: 58px;
}
.style .big {
  margin: 4px auto 0;
}
.style .g-label {
  right: 16px;
}
.style-ico {
  margin-bottom: 2px;
}
.addin {
  width: 58px;
}
.addin .big {
  margin: 12px auto 0;
}
.addin .g-label {
  right: 0;
}
.dot {
  width: 10px;
  height: 10px;
  margin-bottom: 14px;
  border-radius: 50%;
  background: #ff9100;
  box-shadow: 0 0 2px #ff9100;
}
.two {
  line-height: 15px;
}
.w-canvas {
  flex: 1;
  padding: 17px 1px 17px 0;
  background: #e6e6e6;
}
.paper {
  height: 100%;
  padding: 71px 10px 0 8px;
  border-top: 1px solid #c6c6c6;
  background: #fff;
}
.marks {
  display: flex;
  justify-content: space-between;
}
.marks i {
  width: 24px;
  height: 24px;
  border: solid #aaa;
  border-width: 0 1px 1px 0;
}
.marks i:last-child {
  border-width: 0 0 1px 1px;
}
.doc {
  margin-top: -1px;
  padding: 0 26px 0 25px;
  font-family: "Noto Sans", "Noto Sans CJK SC", sans-serif;
  font-size: 16px;
  line-height: 21px;
}
.doc-line {
  text-align: justify;
  text-align-last: justify;
}
.doc-line:first-child {
  padding-left: 32px;
}
.doc-line:last-child {
  text-align-last: left;
}
.doc-line:last-child::after {
  content: "↵";
  color: #999;
  font-family: "DejaVu Sans", sans-serif;
  font-size: 12px;
}
.doc-fig {
  display: flex;
  align-items: flex-end;
  gap: 3px;
  margin: 10px 0 0 78px;
}
.doc-fig .highlight {
  width: 430px;
  height: 83px;
  padding: 8px 0 0 24px;
}
.doc-fig .flow {
  width: 394px;
}
.ret {
  color: #999;
  font-family: "DejaVu Sans", sans-serif;
}
.w-status {
  display: flex;
  flex: none;
  align-items: center;
  height: 22px;
  padding: 0 2px 0 11px;
  border-top: 1px solid #c8c8c8;
  color: #333;
  font-family: "Open Sans", "Noto Sans CJK SC", sans-serif;
  font-size: 13px;
  line-height: 18px;
}
.w-status > span {
  margin-right: 22px;
}
.w-views {
  display: flex;
  margin-left: auto;
}
.w-views button {
  display: flex;
  justify-content: center;
  align-items: center;
  width: 40px;
  height: 22px;
}
.w-views .on {
  background: #c6c6c6;
}
.step {
  margin: 0 4px;
  line-height: 9px;
}
.w-views + .step {
  margin-left: 6px;
}
.step svg {
  display: block;
}
.w-zoom {
  width: 100px;
  height: 12px;
  appearance: none;
  background: linear-gradient(#444, #444) center / 100% 1px no-repeat;
}
.w-zoom::-webkit-slider-thumb {
  appearance: none;
  width: 5px;
  height: 12px;
  background: #444;
}
.w-status > .pct {
  width: 33px;
  margin: 0 0 0 9px;
  font-size: 12px;
}
.annotations {
  position: absolute;
  left: 0;
  top: 0;
  pointer-events: none;
}
</style>
